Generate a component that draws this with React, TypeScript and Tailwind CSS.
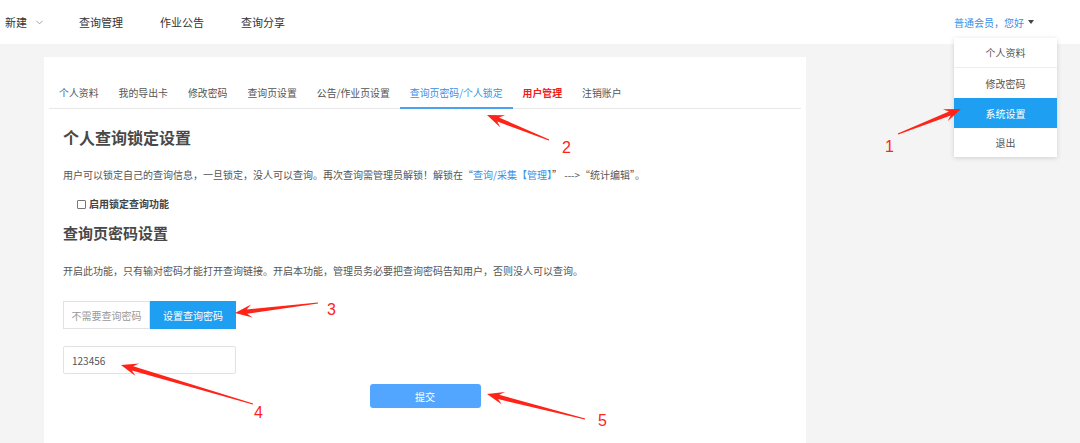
import { ChevronDown } from 'lucide-react'

const font = { fontFamily: '"Noto Sans CJK SC", "Noto Sans", sans-serif' }

const tabs = ['个人资料', '我的导出卡', '修改密码', '查询页设置', '公告/作业页设置', '查询页密码/个人锁定', '用户管理', '注销账户']

type ArrowProps = { tip: [number, number]; tail: [number, number] }

function Arrow({ tip, tail }: ArrowProps) {
  const dx = tip[0] - tail[0]
  const dy = tip[1] - tail[1]
  const len = Math.hypot(dx, dy)
  const ux = dx / len
  const uy = dy / len
  const nx = -uy
  const ny = ux
  const p = (along: number, side: number) =>
    `${tip[0] - ux * along + nx * side},${tip[1] - uy * along + ny * side}`
  const points = [
    p(0, 0),
    p(17, 6.5),
    p(12, 2.2),
    `${tail[0] + nx * 0.6},${tail[1] + ny * 0.6}`,
    `${tail[0] - nx * 0.6},${tail[1] - ny * 0.6}`,
    p(12, -2.2),
    p(17, -6.5),
  ].join(' ')
  return <polygon points={points} fill="#ff2318" />
}

function Annotations() {
  const labels: [string, number, number][] = [
    ['1', 885, 152],
    ['2', 562, 153],
    ['3', 327, 315],
    ['4', 254, 418],
    ['5', 598, 426],
  ]
  return (
    <svg className="pointer-events-none absolute inset-0" width="1080" height="443">
      <Arrow tip={[961, 109]} tail={[898, 134]} />
      <Arrow tip={[487, 115]} tail={[549, 140]} />
      <Arrow tip={[235, 313]} tail={[318, 303]} />
      <Arrow tip={[121, 365]} tail={[253, 404]} />
      <Arrow tip={[487, 394]} tail={[585, 419]} />
      {labels.map(([t, x, y]) => (
        <text key={t} x={x} y={y} fill="#ff2318" fontSize="16" fontFamily="Liberation Sans, sans-serif">
          {t}
        </text>
      ))}
    </svg>
  )
}

export default function App() {
  return (
    <div className="relative h-[443px] w-[1080px] overflow-hidden bg-[#f4f4f4]" style={font}>
      <header className="flex h-[44px] items-center bg-white pl-[5px] pr-[46px] text-[11px] text-[#333]">
        <div className="flex items-center gap-[7px]">
          <span>新建</span>
          <ChevronDown className="h-[11px] w-[11px] text-[#999]" />
        </div>
        <nav className="ml-[34px] flex gap-[37px]">
          <span>查询管理</span>
          <span>作业公告</span>
          <span>查询分享</span>
        </nav>
        <div className="ml-auto flex items-center gap-[4px] text-[10px] text-[#3a8ee6]">
          <span>普通会员，您好</span>
          <span className="h-0 w-0 border-x-[3.5px] border-t-[4px] border-x-transparent border-t-[#444]" />
        </div>
      </header>

      <div className="absolute left-[954px] top-[38px] w-[103px] bg-white text-center text-[10px] text-[#555] shadow-[0_1px_5px_rgba(0,0,0,0.15)]">
        <div className="flex h-[30px] items-center justify-center border-b border-[#eee]">个人资料</div>
        <div className="flex h-[30px] items-center justify-center">修改密码</div>
        <div className="flex h-[30px] items-center justify-center bg-[#1f9ff2] text-white">系统设置</div>
        <div className="flex h-[29px] items-center justify-center">退出</div>
      </div>

      <main className="pl-[44px] pt-[13px]">
        <section className="h-[400px] w-[762px] bg-white px-[5px] pt-[22px]">
          <div className="flex border-b border-[#e8e8e8] text-[9.9px]">
            {tabs.map((t) => {
              const active = t === '查询页密码/个人锁定'
              const red = t === '用户管理'
              return (
                <div
                  key={t}
                  className={
                    active
                      ? '-mb-px flex h-[30px] items-center border-b-2 border-[#4aa3ef] px-[10px] text-[#3a8ee6]'
                      : red
                        ? 'flex h-[29px] items-center px-[10px] font-bold text-[#f21c1c]'
                        : 'flex h-[29px] items-center px-[10px] text-[#555]'
                  }
                >
                  {t}
                </div>
              )
            })}
          </div>

          <div className="px-[14px] text-[#555]">
            <h2 className="mt-[17px] text-[16px] font-bold leading-[22px] text-[#484848]">个人查询锁定设置</h2>
            <p className="mt-[20px] text-[10px] leading-[14px]">
              用户可以锁定自己的查询信息，一旦锁定，没人可以查询。再次查询需管理员解锁！解锁在“
              <span className="text-[#3a8ee6]">查询/采集【管理】</span>” ---&gt;“统计编辑”。
            </p>
            <label className="mt-[15px] flex items-center gap-[3px] pl-[14px] text-[10px] font-bold leading-[14px] text-[#444]">
              <span className="inline-block h-[9px] w-[9px] rounded-[1px] border border-[#777]" />
              启用锁定查询功能
            </label>
            <h2 className="mt-[11px] text-[15px] font-bold leading-[22px] text-[#484848]">查询页密码设置</h2>
            <p className="mt-[20px] text-[10px] leading-[14px]">
              开启此功能，只有输对密码才能打开查询链接。开启本功能，管理员务必要把查询密码告知用户，否则没人可以查询。
            </p>

            <div className="mt-[23px] flex h-[28px] w-[173px] text-[10px]">
              <div className="flex w-[87px] items-center justify-center border border-[#e2e2e2] text-[#999]">不需要查询密码</div>
              <div className="flex w-[86px] items-center justify-center bg-[#1f9ff2] text-white">设置查询密码</div>
            </div>

            <div className="mt-[17px] flex h-[28px] w-[173px] items-center rounded-[2px] border border-[#e2e2e2] px-[8px] text-[10px] text-[#555]">
              123456
            </div>

            <div className="mt-[10px] flex justify-center">
              <button className="h-[24px] w-[111px] rounded-[3px] bg-[#52a6ff] text-[10px] text-white">提交</button>
            </div>
          </div>
        </section>
      </main>

      <Annotations />
    </div>
  )
}
